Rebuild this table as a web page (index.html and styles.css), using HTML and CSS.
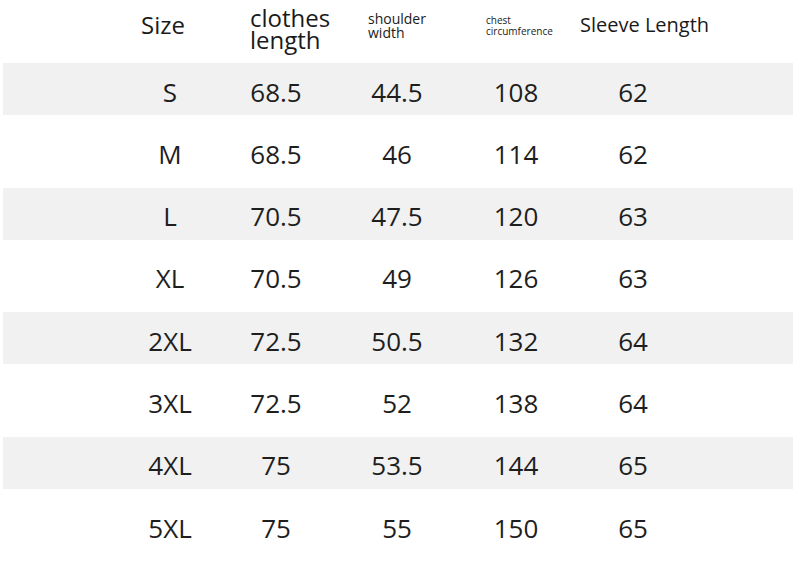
FILE: index.html
```html
<!DOCTYPE html>
<html lang="en">
<head>
<meta charset="utf-8">
<title>Size chart</title>
<link rel="stylesheet" href="styles.css">
</head>
<body>
<div class="chart">
  <div class="head">
    <div class="h h-size">Size</div>
    <div class="h h-len"><div>clothes</div><div>length</div></div>
    <div class="h h-sh"><div>shoulder</div><div>width</div></div>
    <div class="h h-chest"><div>chest</div><div>circumference</div></div>
    <div class="h h-sleeve">Sleeve Length</div>
  </div>
  <div class="row gray"><span>S</span><span>68.5</span><span>44.5</span><span>108</span><span>62</span></div>
  <div class="row"><span>M</span><span>68.5</span><span>46</span><span>114</span><span>62</span></div>
  <div class="row gray"><span>L</span><span>70.5</span><span>47.5</span><span>120</span><span>63</span></div>
  <div class="row"><span>XL</span><span>70.5</span><span>49</span><span>126</span><span>63</span></div>
  <div class="row gray"><span>2XL</span><span>72.5</span><span>50.5</span><span>132</span><span>64</span></div>
  <div class="row"><span>3XL</span><span>72.5</span><span>52</span><span>138</span><span>64</span></div>
  <div class="row gray"><span>4XL</span><span>75</span><span>53.5</span><span>144</span><span>65</span></div>
  <div class="row"><span>5XL</span><span>75</span><span>55</span><span>150</span><span>65</span></div>
</div>
</body>
</html>
```

FILE: styles.css
```css
html, body {
  margin: 0;
  padding: 0;
  background: #ffffff;
}

body {
  font-family: "Open Sans", "Noto Sans", sans-serif;
  color: #222222;
  width: 797px;
  height: 575px;
  overflow: hidden;
}

.chart {
  margin-left: 3px;
  width: 790px;
}

.head,
.row {
  display: grid;
  grid-template-columns: 106px 106px 136px 102px 132px;
  padding-left: 114px;
  box-sizing: border-box;
}

.head {
  height: 63px;
  align-items: start;
}

.h {
  text-align: left;
  color: #1a1a1a;
}

.h-size {
  font-size: 24px;
  line-height: 24px;
  padding-top: 13px;
  padding-left: 24px;
}

.h-len {
  font-size: 24px;
  line-height: 22px;
  padding-top: 7px;
  padding-left: 27px;
}

.h-sh {
  font-size: 14px;
  line-height: 14px;
  padding-top: 12px;
  padding-left: 39px;
}

.h-chest {
  font-size: 10px;
  line-height: 11px;
  padding-top: 15px;
  padding-left: 21px;
}

.h-sleeve {
  font-size: 20px;
  line-height: 24px;
  padding-top: 13px;
  padding-left: 13px;
  white-space: nowrap;
}

.row {
  height: 72.67px;
  align-items: center;
  padding-top: 5px;
  font-size: 26px;
  color: #1e1e1e;
}

.row.gray {
  height: 52px;
  background: #f1f1f1;
}

.row span {
  text-align: center;
  line-height: 30px;
}
```
